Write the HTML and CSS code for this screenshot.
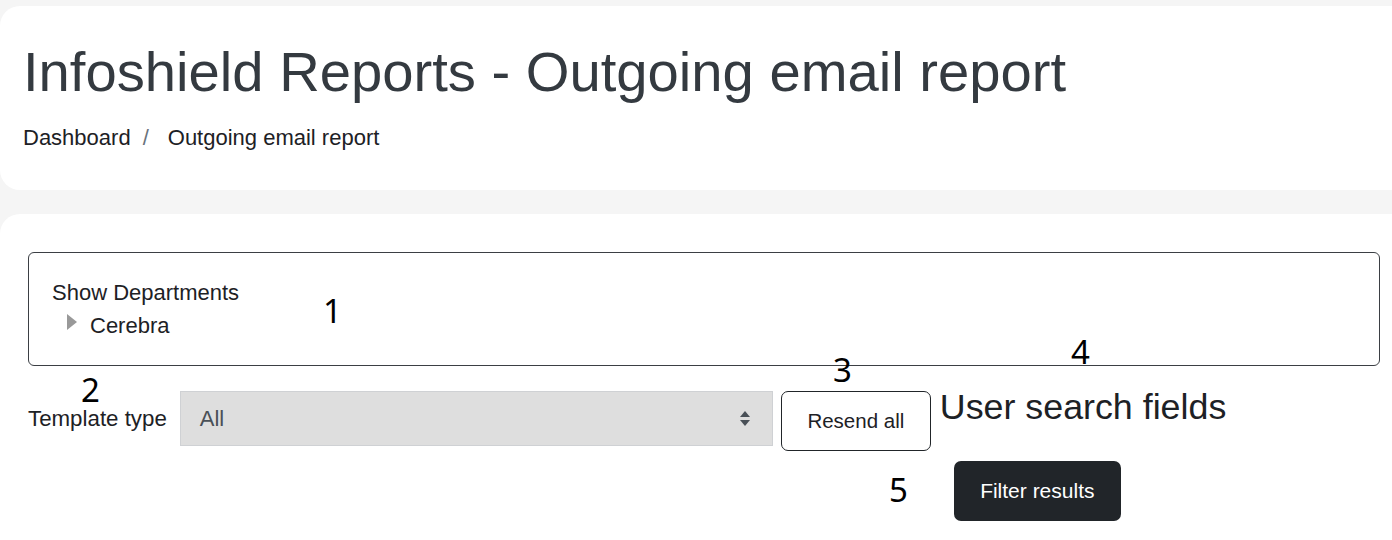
FILE: index.html
```html
<!DOCTYPE html>
<html lang="en">
<head>
<meta charset="utf-8">
<title>Outgoing email report</title>
<link rel="stylesheet" href="styles.css">
</head>
<body>
<div class="page">
  <header class="head-card">
    <h1 class="title">Infoshield Reports - Outgoing email report</h1>
    <nav class="crumbs">
      <span class="crumb">Dashboard</span><span class="sep">/</span><span class="crumb">Outgoing email report</span>
    </nav>
  </header>

  <main class="main-card">
    <div class="dept-box">
      <div class="dept-title">Show Departments</div>
      <div class="dept-item"><span class="caret"></span><span>Cerebra</span></div>
    </div>

    <div class="filter-row">
      <label class="field-label">Template type</label>
      <div class="select">
        <span class="select-value">All</span>
        <svg class="select-arrow" width="10" height="15" viewBox="0 0 10 15"><polygon points="0,6 5,0 10,6" fill="#495057"/><polygon points="0,9 10,9 5,15" fill="#495057"/></svg>
      </div>
      <button class="btn-outline">Resend all</button>
      <div class="user-search">
        <h3 class="us-title">User search fields</h3>
        <button class="btn-dark">Filter results</button>
      </div>
    </div>
  </main>

  <span class="anno anno-1">1</span>
  <span class="anno anno-2">2</span>
  <span class="anno anno-3">3</span>
  <span class="anno anno-4">4</span>
  <span class="anno anno-5">5</span>
</div>
</body>
</html>
```

FILE: styles.css
```css
html, body {
  margin: 0;
  padding: 0;
}

body {
  background: #f5f5f5;
  font-family: "Liberation Sans", Arial, sans-serif;
  color: #1d2125;
  overflow: hidden;
  height: 540px;
}

.page {
  position: relative;
  padding-top: 6px;
  height: 534px;
  display: flex;
  flex-direction: column;
}

/* header card */
.head-card {
  background: #ffffff;
  border-radius: 20px 0 0 20px;
  height: 184px;
  box-sizing: border-box;
  padding: 34px 0 0 23px;
}

.title {
  margin: 0;
  font-size: 56.2px;
  line-height: 64px;
  font-weight: 400;
  color: #343a40;
  white-space: nowrap;
}

.crumbs {
  margin-top: 21px;
  font-size: 22px;
  line-height: 26px;
  display: flex;
  color: #1d2125;
}

.sep {
  margin: 0 19px 0 12px;
  color: #6a737b;
}

/* main card */
.main-card {
  margin-top: 24px;
  flex: 1;
  background: #ffffff;
  border-radius: 20px 0 0 0;
  padding: 38px 12px 0 28px;
}

.dept-box {
  border: 1px solid #3b3f44;
  border-radius: 6px;
  padding: 23px 23px 23px;
  font-size: 22px;
  line-height: 33px;
  color: #1d2125;
}

.dept-item {
  display: flex;
  align-items: center;
  padding-left: 15px;
}

.caret {
  width: 0;
  height: 0;
  border-left: 10px solid #999999;
  border-top: 8px solid transparent;
  border-bottom: 8px solid transparent;
  margin-right: 13px;
  margin-top: -8px;
}

/* filter row */
.filter-row {
  margin-top: 25px;
  display: flex;
  align-items: flex-start;
}

.field-label {
  font-size: 22.3px;
  line-height: 55px;
  margin-right: 13px;
  color: #1d2125;
}

.select {
  width: 593px;
  height: 55px;
  box-sizing: border-box;
  background: #dedede;
  border: 1px solid #cfd1d4;
  display: flex;
  align-items: center;
  justify-content: space-between;
  padding: 0 22px 0 19px;
  font-size: 22px;
  color: #495057;
}

.select-arrow {
  display: block;
}

.btn-outline {
  margin-left: 8px;
  width: 150px;
  height: 60px;
  box-sizing: border-box;
  background: #ffffff;
  border: 1px solid #212529;
  border-radius: 7px;
  font-family: "Liberation Sans", Arial, sans-serif;
  font-size: 20.5px;
  color: #1d2125;
  padding: 0;
}

.user-search {
  margin-left: 9px;
  display: flex;
  flex-direction: column;
  align-items: flex-start;
}

.us-title {
  margin: -4px 0 0 0;
  font-size: 35.8px;
  line-height: 40px;
  font-weight: 400;
  color: #1d2125;
  white-space: nowrap;
}

.btn-dark {
  margin: 34px 0 0 14px;
  width: 167px;
  height: 60px;
  box-sizing: border-box;
  background: #212529;
  border: none;
  border-radius: 7px;
  font-family: "Liberation Sans", Arial, sans-serif;
  font-size: 21px;
  color: #ffffff;
  padding: 0;
}

/* numbered annotations drawn over the page */
.anno {
  position: absolute;
  font-family: "Noto Sans", "Open Sans", sans-serif;
  font-size: 33px;
  line-height: 33px;
  color: #000000;
}

.anno-1 { left: 323px; top: 294px; }
.anno-2 { left: 81px;  top: 373px; }
.anno-3 { left: 833px; top: 353px; }
.anno-4 { left: 1071px; top: 335px; }
.anno-5 { left: 889px; top: 473px; }
```
